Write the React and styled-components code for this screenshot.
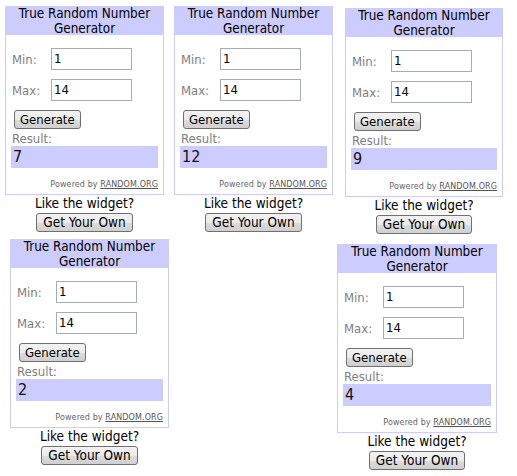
import React from "react";
import styled, { createGlobalStyle } from "styled-components";

const Global = createGlobalStyle`
  html, body { margin: 0; padding: 0; background: #ffffff; }
  body { font-family: Tahoma, "DejaVu Sans Condensed", "DejaVu Sans", sans-serif; }
`;

const Page = styled.div`
  width: 517px;
  height: 476px;
  display: flex;
  flex-direction: column;
  overflow: hidden;
`;

const Row = styled.div`
  display: flex;
  align-items: flex-start;
  height: ${(p) => p.$h}px;
`;

const Cell = styled.div`
  display: flex;
  flex-direction: column;
  align-items: center;
  width: ${(p) => p.$w}px;
  margin-left: ${(p) => p.$dx}px;
  margin-top: ${(p) => p.$dy}px;
`;

const Box = styled.div`
  box-sizing: border-box;
  width: 100%;
  height: 189px;
  border: 1px solid #ccccff;
  border-top: none;
  display: flex;
  flex-direction: column;
  background: #fff;
`;

const Header = styled.div`
  background: #ccccff;
  height: 29px;
  margin: 0 -1px;
  box-sizing: border-box;
  padding-top: 0px;
  text-align: center;
  font-size: 13.4px;
  line-height: 15px;
  color: #000;
`;

const Body = styled.div`
  display: flex;
  flex-direction: column;
  padding: 13px 5px 0 5px;
`;

const Field = styled.div`
  display: flex;
  align-items: center;
  height: 22px;
  margin-bottom: 9px;
`;

const Label = styled.span`
  width: 39px;
  padding-left: 1px;
  font-size: 13px;
  color: #808080;
`;

const Input = styled.div`
  box-sizing: border-box;
  width: 81px;
  height: 22px;
  border: 1px solid #a5acb2;
  background: #fff;
  font-size: 13px;
  line-height: 20px;
  padding-left: 2px;
  color: #000;
`;

const Btn = styled.div`
  box-sizing: border-box;
  height: 19px;
  padding: 0 5px;
  border: 1px solid #707070;
  border-radius: 3px;
  background: linear-gradient(#f2f2f2 0%, #ebebeb 50%, #dddddd 51%, #cfcfcf 100%);
  font-size: 13px;
  line-height: 17px;
  color: #000;
  white-space: nowrap;
  align-self: ${(p) => (p.$left ? "flex-start" : "center")};
  margin-left: ${(p) => p.$ml || 0}px;
`;

const ResultLabel = styled.div`
  margin-top: 2px;
  font-size: 13px;
  line-height: 15px;
  color: #808080;
  padding-left: 1px;
`;

const ResultBar = styled.div`
  height: 22px;
  background: #ccccff;
  font-size: 16px;
  line-height: 22px;
  padding-left: 2px;
  color: #111;
`;

const Powered = styled.div`
  margin-top: 12px;
  text-align: right;
  font-size: 8px;
  color: #666;
  font-family: "DejaVu Sans", Verdana, sans-serif;
  letter-spacing: 0.1px;
`;

const Link = styled.span`
  text-decoration: underline;
  color: #555;
`;

const Like = styled.div`
  margin-top: 0px;
  font-size: 13.5px;
  line-height: 16px;
  color: #000;
`;

const OwnBtn = styled(Btn)`
  margin-top: 2px;
  padding: 0 6px;
  font-size: 13.5px;
`;

function Widget({ value, w = 159, dx, dy }) {
  return (
    <Cell $w={w} $dx={dx} $dy={dy}>
      <Box>
        <Header>
          True Random Number
          <br />
          Generator
        </Header>
        <Body>
          <Field>
            <Label>Min:</Label>
            <Input>1</Input>
          </Field>
          <Field>
            <Label>Max:</Label>
            <Input>14</Input>
          </Field>
          <Btn $left $ml={3}>Generate</Btn>
          <ResultLabel>Result:</ResultLabel>
          <ResultBar>{value}</ResultBar>
          <Powered>
            Powered by <Link>RANDOM.ORG</Link>
          </Powered>
        </Body>
      </Box>
      <Like>Like the widget?</Like>
      <OwnBtn>Get Your Own</OwnBtn>
    </Cell>
  );
}

export default function App() {
  return (
    <Page>
      <Global />
      <Row $h={238}>
        <Widget value="7" dx={5} dy={6} />
        <Widget value="12" dx={10} dy={6} />
        <Widget value="9" dx={12} dy={8} w={158} />
      </Row>
      <Row $h={238}>
        <Widget value="2" dx={10} dy={1} />
        <Widget value="4" dx={168} dy={6} w={160} />
      </Row>
    </Page>
  );
}
